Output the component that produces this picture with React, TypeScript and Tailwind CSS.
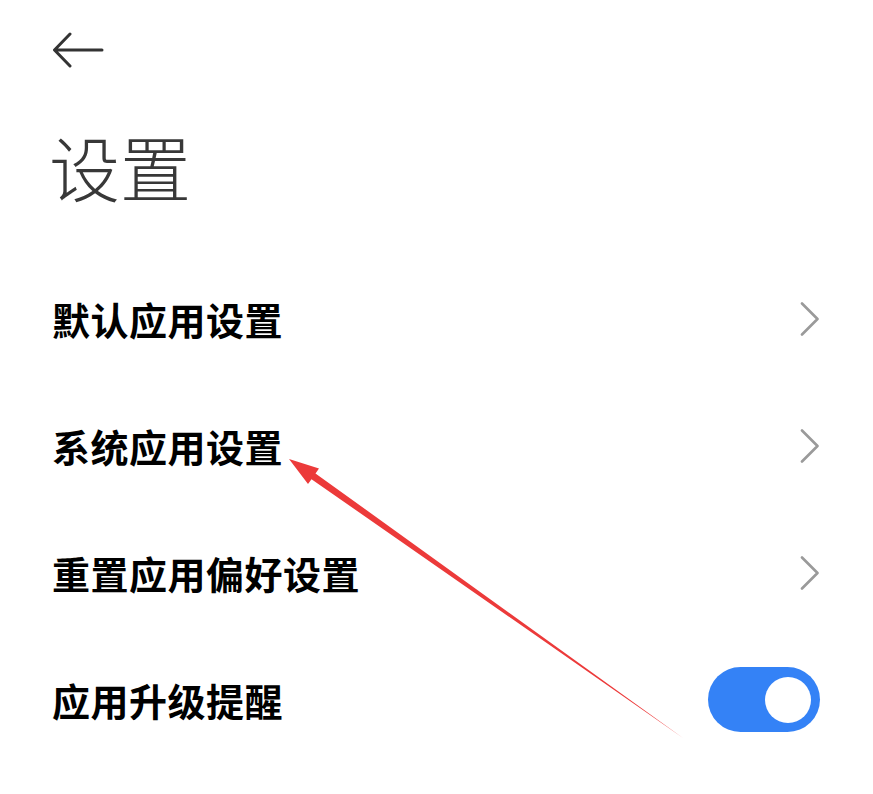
import React from 'react';

const font = { fontFamily: '"Noto Sans CJK SC", "Noto Sans", sans-serif' };

const Chevron = () => (
  <svg width="20" height="34" viewBox="0 0 20 34" fill="none" className="shrink-0">
    <path d="M2 1.5 L17.5 17 L2 32.5" stroke="#9a9a9a" strokeWidth="2.6" strokeLinecap="round" strokeLinejoin="round" />
  </svg>
);

const Toggle = () => (
  <div className="w-[112px] h-[65px] rounded-full bg-[#3482f6] flex items-center justify-end pr-[9px]">
    <div className="w-[46px] h-[46px] rounded-full bg-white" />
  </div>
);

const Row = ({ label, right }: { label: string; right: React.ReactNode }) => (
  <div className="h-[127px] flex items-center justify-between pr-[53px]">
    <span className="text-[38px] font-bold text-black leading-none tracking-[0.5px]">{label}</span>
    {right}
  </div>
);

export default function App() {
  return (
    <div className="relative w-[873px] h-[794px] bg-white overflow-hidden" style={font}>
      <div className="pl-[52px] pt-[32px]">
        <svg width="52" height="36" viewBox="0 0 52 36" fill="none">
          <path d="M50 18 H3 M18 2 L2.5 18 L18 34" stroke="#333" strokeWidth="3" strokeLinecap="round" strokeLinejoin="round" />
        </svg>
        <h1 className="mt-[62px] -ml-[3px] text-[71px] font-light text-[#383838] leading-none tracking-[0px]">设置</h1>
        <div className="mt-[54px]">
          <Row label="默认应用设置" right={<Chevron />} />
          <Row label="系统应用设置" right={<Chevron />} />
          <Row label="重置应用偏好设置" right={<Chevron />} />
          <Row label="应用升级提醒" right={<Toggle />} />
        </div>
      </div>
      <svg className="absolute left-0 top-0 pointer-events-none" width="873" height="794" viewBox="0 0 873 794">
        <polygon
          points="289,459 319,468.5 315.5,473.4 683,738 311.5,479.2 308,484"
          fill="#ec3a3a"
        />
      </svg>
    </div>
  );
}
